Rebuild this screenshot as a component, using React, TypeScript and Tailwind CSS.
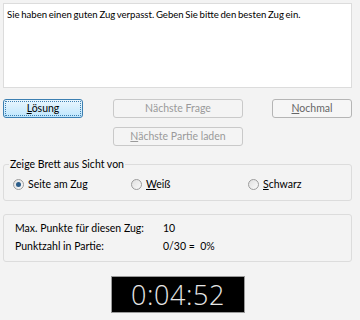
import React from "react";

const font = { fontFamily: 'Lato, "Noto Sans", sans-serif' };

function Btn({
  u,
  rest,
  disabled,
  focus,
  className,
}: {
  u: string;
  rest: string;
  disabled?: boolean;
  focus?: boolean;
  className: string;
}) {
  const base = "h-[19px] rounded-[3px] border text-[10.5px] leading-none flex items-center justify-center";
  const look = focus
    ? "border-[#3c7fb1] bg-gradient-to-b from-[#eaf6fd] to-[#bee6fd] text-black outline outline-1 outline-dotted outline-[#3c7fb1] -outline-offset-3"
    : disabled
    ? "border-[#c9c9c9] bg-[#f4f4f4] text-[#9a9a9a]"
    : "border-[#b5b5b5] bg-[#f6f6f6] text-[#666]";
  return (
    <div className={`${base} ${look} ${className}`}>
      <span>
        <span className="underline">{u}</span>
        {rest}
      </span>
    </div>
  );
}

function Radio({ checked, u, rest }: { checked?: boolean; u?: string; rest: string }) {
  return (
    <div className="flex items-center gap-[4px]">
      <div className="w-[11px] h-[11px] rounded-full border border-[#9c9c9c] bg-gradient-to-br from-[#e0e0e0] to-[#fafafa] flex items-center justify-center">
        {checked && <div className="w-[5px] h-[5px] rounded-full bg-[#2b5d8a]" />}
      </div>
      <span className="text-[10.5px] text-black">
        {u && <span className="underline">{u}</span>}
        {rest}
      </span>
    </div>
  );
}

export default function App() {
  return (
    <div className="w-[360px] h-[320px] bg-[#f3f3f3] px-[3px] pt-[3px]" style={font}>
      <div className="w-[349px] h-[85px] bg-white border border-[#dcdcdc] px-[3px] pt-[4px] text-[9.6px] text-black leading-[13px] [word-spacing:-0.8px]">
        Sie haben einen guten Zug verpasst. Geben Sie bitte den besten Zug ein.
      </div>

      <div className="mt-[11px] w-[349px] flex flex-col">
        <div className="flex">
          <Btn u="L" rest="ösung" focus className="w-[80px]" />
          <Btn u="" rest="Nächste Frage" disabled className="w-[130px] ml-[30px]" />
          <Btn u="N" rest="ochmal" className="w-[80px] ml-[29px]" />
        </div>
        <div className="flex mt-[9px]">
          <Btn u="N" rest="ächste Partie laden" disabled className="w-[130px] ml-[110px]" />
        </div>
      </div>

      <div className="relative mt-[18px] w-[349px] h-[37px] border border-[#dcdcdc] rounded-[3px]">
        <span className="absolute -top-[8px] left-[5px] bg-[#f3f3f3] px-[1px] text-[10.5px] text-black leading-[14px]">
          Zeige Brett aus Sicht von
        </span>
        <div className="grid grid-cols-[118px_117px_1fr] pl-[9px] pt-[12px]">
          <Radio checked rest="Seite am Zug" />
          <Radio u="W" rest="eiß" />
          <Radio u="S" rest="chwarz" />
        </div>
      </div>

      <div className="mt-[13px] w-[349px] h-[48px] border border-[#dcdcdc] rounded-[3px] px-[11px] pt-[6px] text-[10.5px] text-black leading-[14px]">
        <div className="grid grid-cols-[148px_100px] gap-y-[4px]">
          <span className="whitespace-nowrap">Max. Punkte für diesen Zug:</span>
          <span>10</span>
          <span className="whitespace-nowrap">Punktzahl in Partie:</span>
          <span className="whitespace-pre">0/30 =  0%</span>
        </div>
      </div>

      <div className="mt-[14px] flex">
        <div className="ml-[108px] w-[134px] h-[37px] bg-black border border-[#9a9a9a] flex items-center justify-center">
          <span className="text-[27px] font-light text-[#e6e6e6] leading-none tracking-[0.6px]" style={{ fontFamily: '"Open Sans", "Noto Sans", sans-serif' }}>
            0:04:52
          </span>
        </div>
      </div>
    </div>
  );
}
